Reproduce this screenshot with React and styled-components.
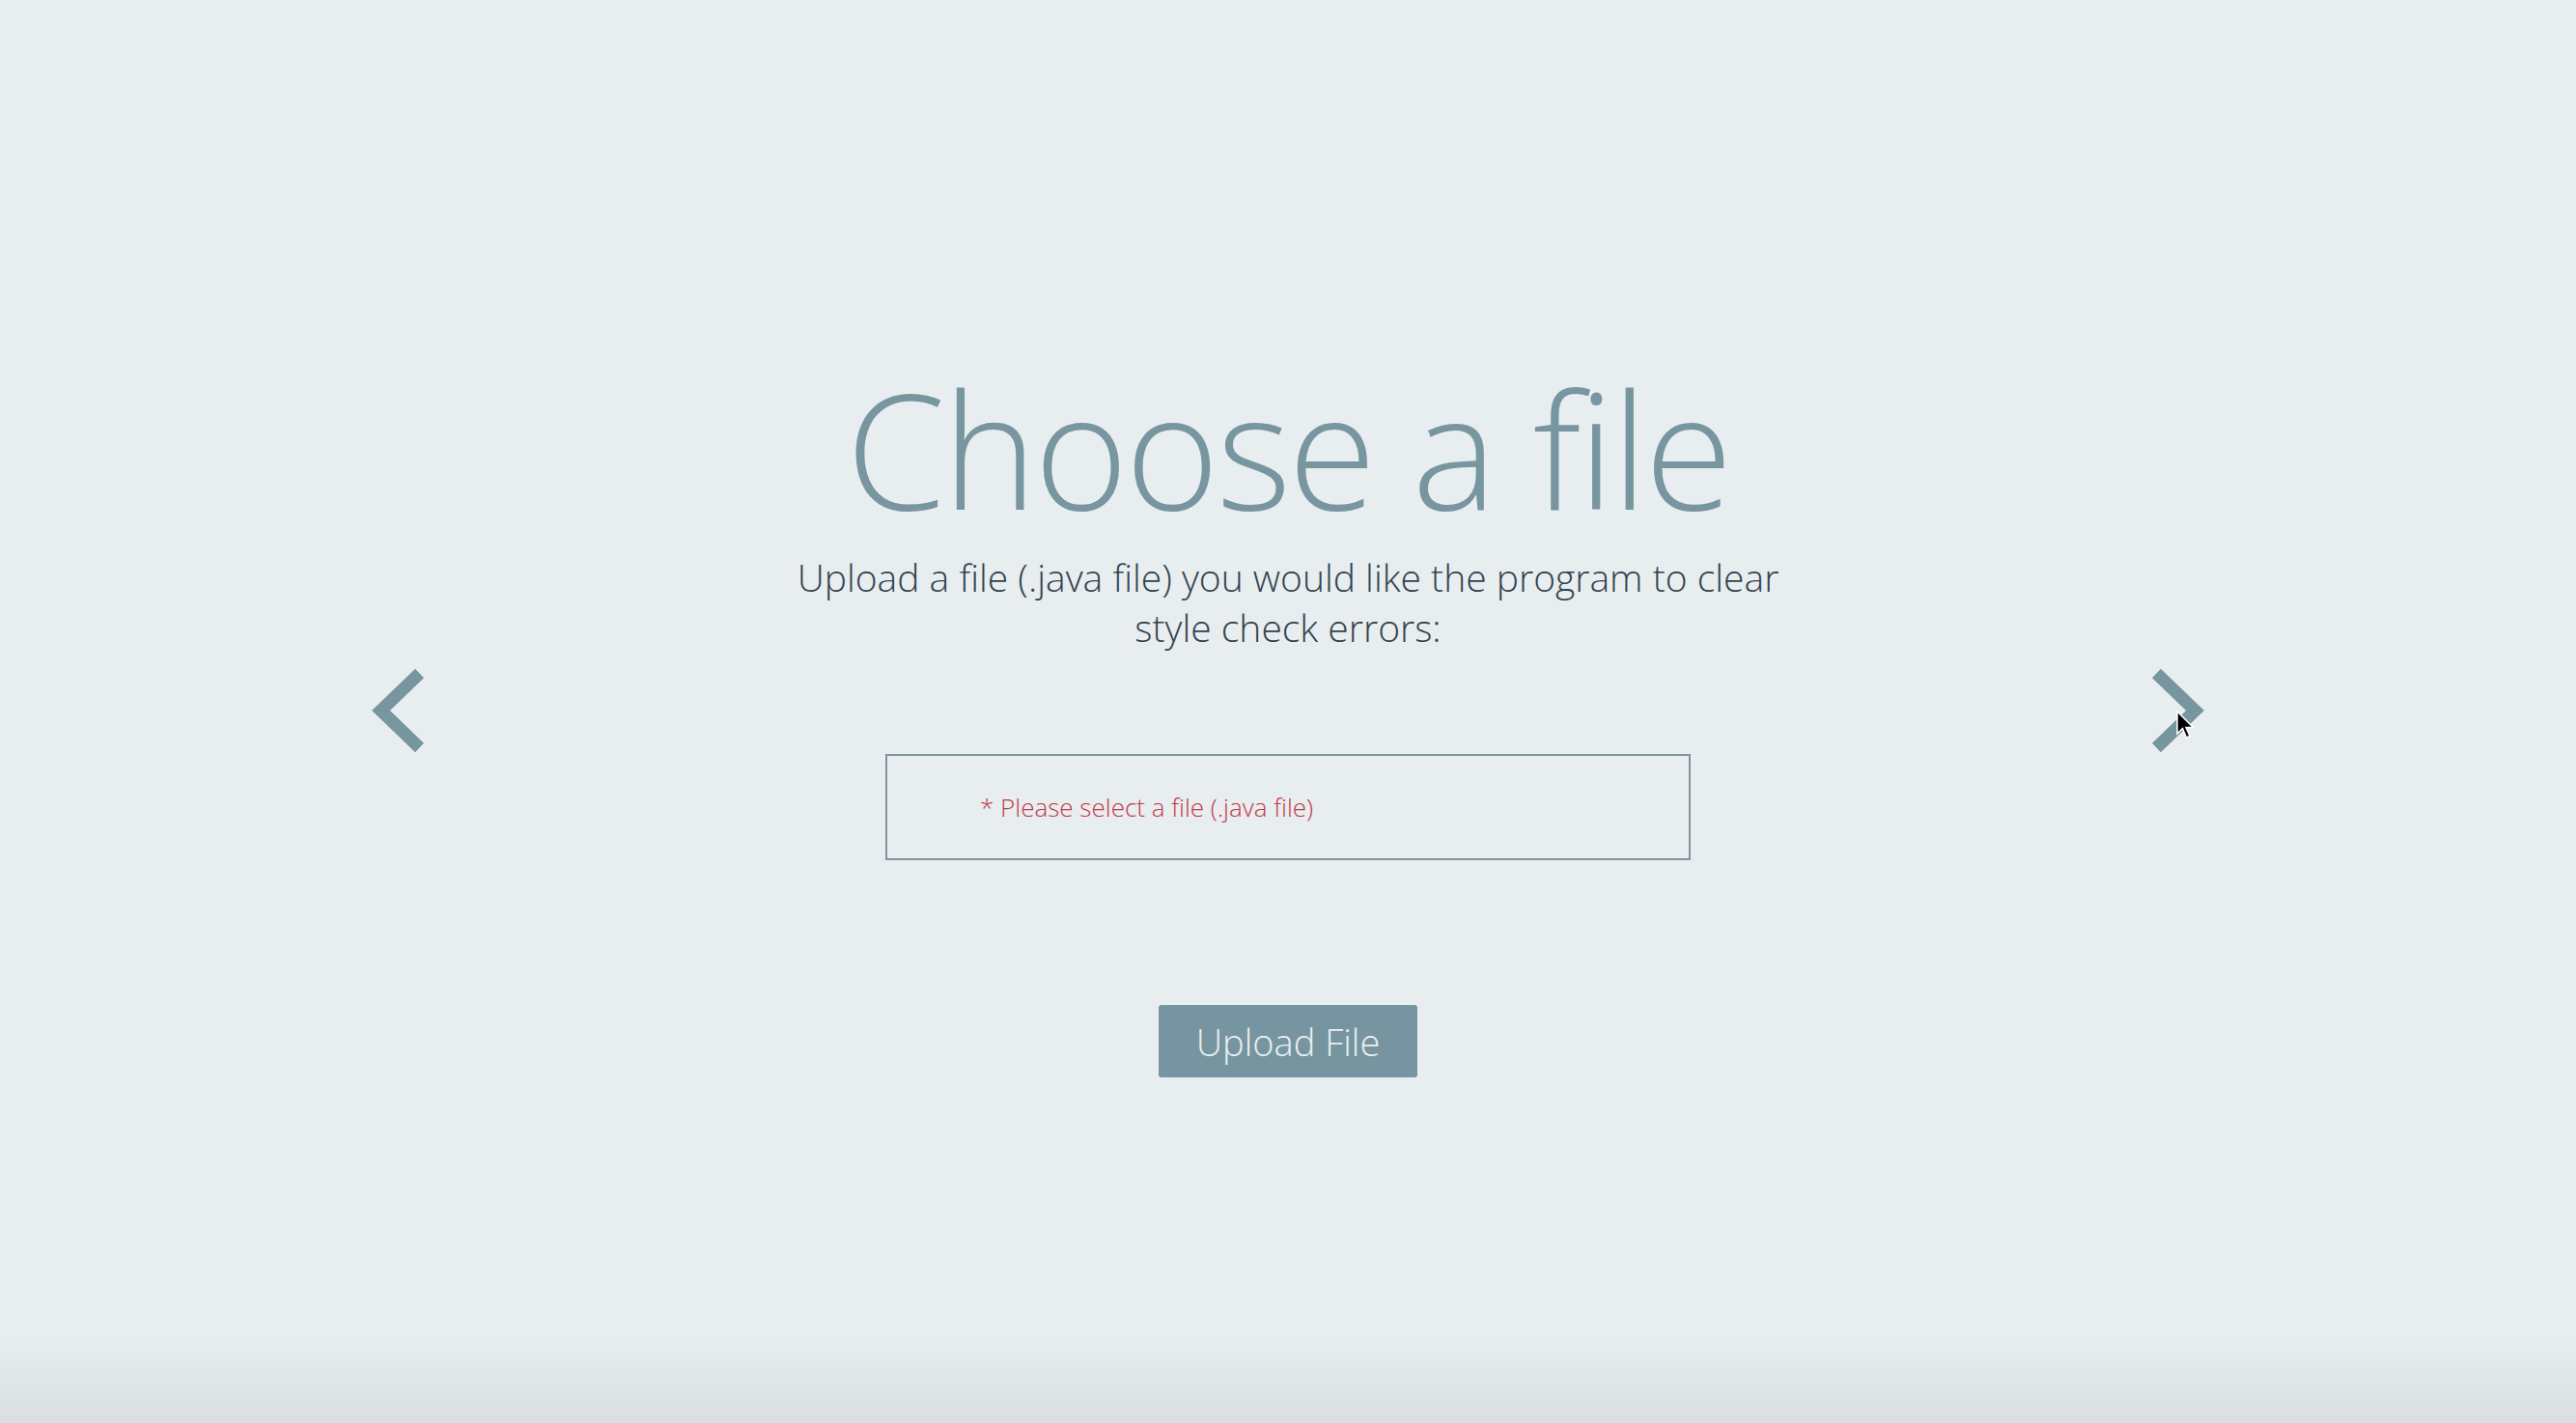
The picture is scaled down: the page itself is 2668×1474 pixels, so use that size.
import React from 'react';
import styled, { createGlobalStyle } from 'styled-components';

const GlobalStyle = createGlobalStyle`
  html, body {
    margin: 0;
    padding: 0;
  }
  body {
    font-family: 'Open Sans', 'Liberation Sans', sans-serif;
    background: #e8edf0;
  }
`;

const Page = styled.div`
  position: relative;
  min-height: 100vh;
  background: linear-gradient(
    to bottom,
    #e8edf0 0,
    #e8edf0 calc(100% - 90px),
    #d9dee1 100%
  );
  display: flex;
  flex-direction: column;
`;

const Carousel = styled.div`
  display: flex;
  justify-content: space-between;
  align-items: flex-start;
  padding: 365px 379px 0;
`;

const Arrow = styled.button`
  border: 0;
  background: none;
  padding: 0;
  margin-top: 321px;
  width: 66px;
  height: 100px;
  cursor: pointer;
  color: #7896a0;
`;

const Slide = styled.div`
  display: flex;
  flex-direction: column;
  align-items: center;
  text-align: center;
`;

const Title = styled.h1`
  margin: 0;
  font-weight: 300;
  font-size: 166px;
  line-height: 1.2;
  color: #7896a0;
  letter-spacing: -3px;
`;

const Subtitle = styled.p`
  margin: 8px 0 0;
  max-width: 1060px;
  font-weight: 300;
  font-size: 39px;
  line-height: 52px;
  color: #33434e;
`;

const FileField = styled.label`
  box-sizing: border-box;
  margin-top: 105px;
  width: 834px;
  height: 110px;
  border: 2px solid #7f949e;
  display: flex;
  align-items: center;
  padding-left: 96px;
  cursor: pointer;
`;

const ErrorText = styled.span`
  font-size: 26px;
  font-weight: 300;
  color: #c23a48;
`;

const UploadButton = styled.button`
  margin-top: 150px;
  width: 268px;
  height: 75px;
  border: 0;
  border-radius: 3px;
  background: #7795a0;
  color: #eaf0f2;
  font-family: 'Open Sans', 'Liberation Sans', sans-serif;
  font-weight: 300;
  font-size: 38px;
  cursor: pointer;
`;

const Cursor = styled.svg`
  position: absolute;
  left: 2254px;
  top: 736px;
  pointer-events: none;
`;

function Chevron({ dir }) {
  const d =
    dir === 'left'
      ? 'M55.5 11.5 L15.5 50 L55.5 88.5'
      : 'M10.5 11.5 L50.5 50 L10.5 88.5';
  return (
    <svg width="66" height="100" viewBox="0 0 66 100">
      <path d={d} fill="none" stroke="currentColor" strokeWidth="13" strokeLinejoin="miter" />
    </svg>
  );
}

export default function App() {
  return (
    <>
      <GlobalStyle />
      <Page>
        <Carousel>
          <Arrow aria-label="previous">
            <Chevron dir="left" />
          </Arrow>
          <Slide>
            <Title>Choose a file</Title>
            <Subtitle>
              Upload a file (.java file) you would like the program to clear style check errors:
            </Subtitle>
            <FileField>
              <ErrorText>* Please select a file (.java file)</ErrorText>
            </FileField>
            <UploadButton>Upload File</UploadButton>
          </Slide>
          <Arrow aria-label="next">
            <Chevron dir="right" />
          </Arrow>
        </Carousel>
        <Cursor width="22" height="30" viewBox="0 0 22 30">
          <path d="M1 1 L1 24 L6.5 18.5 L10.5 28 L14 26.5 L10 17.5 L17.5 17.5 Z" fill="#000" stroke="#fff" strokeWidth="1.5" />
        </Cursor>
      </Page>
    </>
  );
}
